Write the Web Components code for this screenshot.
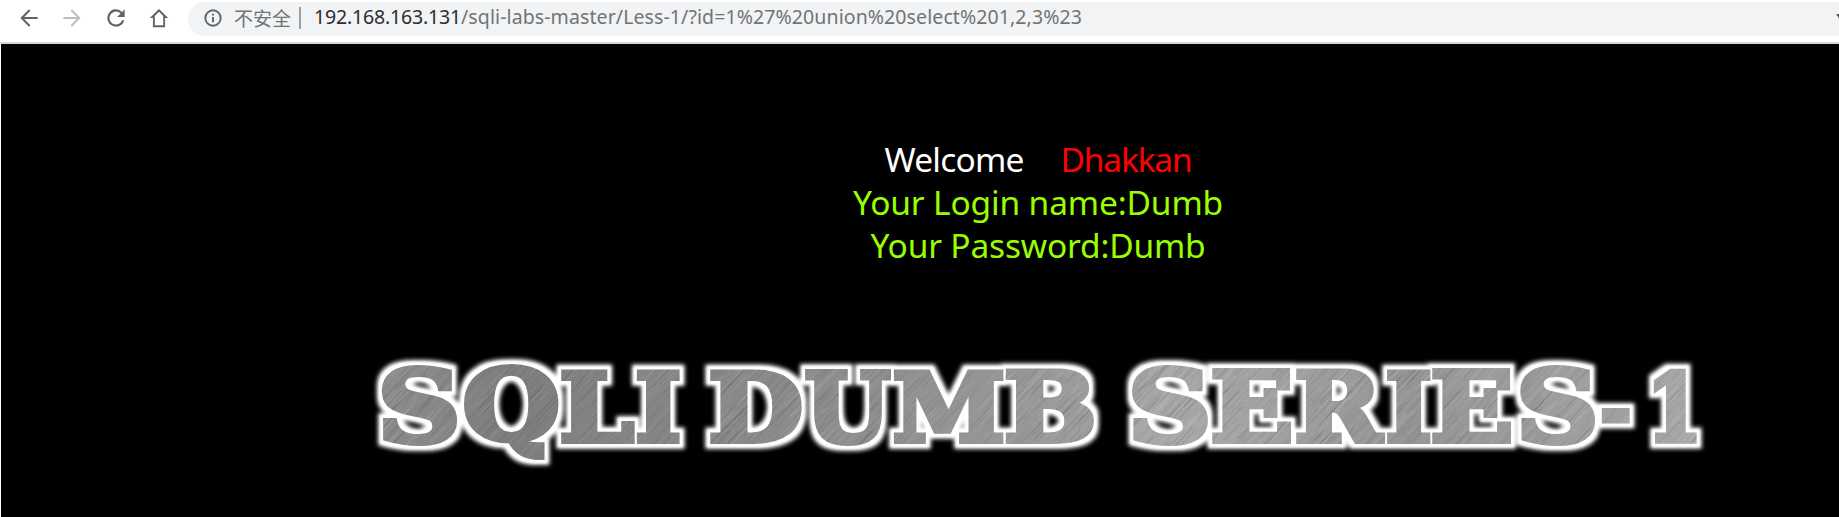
<!DOCTYPE html>
<html lang="en">
<head>
<meta charset="utf-8">
<title>Less-1</title>
<style>
html, body { margin: 0; height: 100%; background: #fff; overflow: hidden; }
body { font-family: "Noto Sans", "Noto Sans CJK SC", sans-serif; }
</style>
</head>
<body>
<lab-window>
  <browser-bar slot="bar"></browser-bar>
  <login-result slot="page"></login-result>
  <metal-banner slot="page"></metal-banner>
</lab-window>
<script>
// <fit-text width="…">: one line of text tracked to an exact advance width
class FitText extends HTMLElement {
  connectedCallback() {
    const root = this.attachShadow({ mode: 'open' });
    root.innerHTML = '<style>:host{display:inline-block;white-space:pre;line-height:1}</style><slot></slot>';
    const cs = getComputedStyle(this);
    const ctx = document.createElement('canvas').getContext('2d');
    ctx.font = `${cs.fontWeight} ${cs.fontSize} ${cs.fontFamily}`;
    const text = this.textContent, want = +this.getAttribute('width');
    this.style.letterSpacing = (want - ctx.measureText(text).width) / text.length + 'px';
    this.style.width = want + 'px';
  }
}
customElements.define('fit-text', FitText);

class LabWindow extends HTMLElement {
  constructor() {
    super();
    this.attachShadow({ mode: 'open' }).innerHTML = `
      <style>
        :host { display: flex; flex-direction: column; height: 517px; background: #fff; }
        main { flex: 1; margin-left: 1px; background: #000; display: flex; flex-direction: column; }
      </style>
      <slot name="bar"></slot><main><slot name="page"></slot></main>`;
  }
}
customElements.define('lab-window', LabWindow);

class BrowserBar extends HTMLElement {
  constructor() {
    super();
    this.attachShadow({ mode: 'open' }).innerHTML = `
      <style>
        :host { display: block; height: 44px; box-sizing: border-box; padding-top: 2px; border-bottom: 2px solid #d3d6da; background: #fff; }
        .row { display: flex; align-items: center; height: 34px; }
        nav { display: flex; width: 172px; padding-left: 16px; gap: 17.3px; align-items: center; flex: none; margin-top: -3px; }
        svg { display: block; width: 26px; height: 26px; fill: #5f6368; flex: none; }
        .off { fill: #bcbec1; }
        .url { flex: 1; min-width: 0; height: 34px; display: flex; align-items: center; background: #f1f3f4; border-radius: 17px 0 0 17px; font-size: 19.5px; color: #707377; overflow: hidden; }
        .info { width: 20px; height: 20px; margin-left: 14.5px; margin-top: -2px; }
        .cn { font-family: "Noto Sans CJK SC", sans-serif; font-weight: 400; font-size: 19px; margin-left: 11.5px; margin-top: -4px; }
        i { width: 2px; height: 22px; background: #9b9ea1; margin: -2px 13px 0 8px; }
        .addr { display: flex; margin-top: -4px; }
        .host { color: #2b2d30; }
        .star { width: 3px; height: 9px; margin: -6px 0 0 auto; }
      </style>
      <div class="row">
        <nav>
          <svg viewBox="0 0 24 24"><path d="M20 11.1H7.6l5.7-5.7L12 4l-8 8 8 8 1.3-1.4-5.7-5.7H20z"/></svg>
          <svg class="off" viewBox="0 0 24 24"><path d="M4 11.1h12.4l-5.7-5.7L12 4l8 8-8 8-1.3-1.4 5.7-5.7H4z"/></svg>
          <svg viewBox="0 0 24 24"><path d="M17.65 6.35A8 8 0 1 0 19.73 14h-2.08A6 6 0 1 1 12 6c1.66 0 3.14.69 4.22 1.78L13 11h7V4z"/></svg>
          <svg viewBox="0 0 24 24"><path d="M12 3.7 3.5 12H6.4v8.5h11.2V12h2.9zm0 2.6 3.9 3.9v8.5H8.1v-8.5z"/></svg>
        </nav>
        <div class="url">
          <svg class="info" viewBox="0 0 20 20"><circle cx="10" cy="10" r="7.7" fill="none" stroke="#5f6368" stroke-width="1.9"/><path d="M9.05 9h1.9v5.2h-1.9zM9.05 5.7h1.9v1.9h-1.9z"/></svg>
          <fit-text class="cn" width="57">不安全</fit-text><i></i>
          <div class="addr"><fit-text class="host" width="147">192.168.163.131</fit-text><fit-text width="621">/sqli-labs-master/Less-1/?id=1%27%20union%20select%201,2,3%23</fit-text></div>
          <svg class="star" viewBox="0 0 3 9"><path d="M0 2.5 3 2v5L2 4.6z" fill="#44474a"/></svg>
        </div>
      </div>`;
  }
}
customElements.define('browser-bar', BrowserBar);

class LoginResult extends HTMLElement {
  constructor() {
    super();
    this.attachShadow({ mode: 'open' }).innerHTML = `
      <style>
        :host { display: flex; flex-direction: column; align-items: center; padding: 94px 0 0 236px; font-size: 33.5px; color: #99ff00; }
        div { height: 43.3px; display: flex; align-items: center; }
        .hi { color: #fff; gap: 37px; }
        .red { color: #f00; }
      </style>
      <div class="hi"><fit-text width="139">Welcome</fit-text><fit-text class="red" width="131">Dhakkan</fit-text></div>
      <div><fit-text width="370">Your Login name:Dumb</fit-text></div>
      <div><fit-text width="335">Your Password:Dumb</fit-text></div>`;
  }
}
customElements.define('login-result', LoginResult);

// Brushed-metal headline: every letter is fitted to its own ink box [char, left, right, top, bottom]
class MetalBanner extends HTMLElement {
  constructor() {
    super();
    const T = 368.5, B = 443.5;
    const glyphs = [
      ['S', 380.5, 457.5, 364.5, 446], ['Q', 463, 559, 364, 459], ['L', 561, 635.5], ['I', 636.5, 679.5], [' '],
      ['D', 710, 802.5], ['U', 805, 891.5, T, 445.5], ['M', 893, 1004], ['B', 1005.5, 1095, T, 444], [' '],
      ['S', 1131, 1208.5, 364.5, 446], ['E', 1212, 1291, T, 444], ['R', 1296, 1386, T, 444], ['I', 1387, 1430.5],
      ['E', 1432, 1511, T, 444], ['S', 1519, 1595.5, 364.5, 446], ['-', 1601, 1630, 407.5, 423], ['1', 1653, 1697]];
    const SIZE = 90, SW = 5.5, font = 'bold 90px "DejaVu Serif"';
    const ctx = document.createElement('canvas').getContext('2d');
    ctx.font = font;
    let pats = '', letters = '';
    glyphs.forEach(([c, l, r, t = T, b = B], i) => {
      if (c === ' ') { letters += '<text> </text>'; return; }
      const m = ctx.measureText(c), x0 = -m.actualBoundingBoxLeft, x1 = m.actualBoundingBoxRight;
      const y0 = -m.actualBoundingBoxAscent, y1 = m.actualBoundingBoxDescent;
      const sx = (r - l) / (x1 - x0 + SW), sy = (b - t) / (y1 - y0 + SW);
      const tx = l - (x0 - SW / 2) * sx, ty = t - (y0 - SW / 2) * sy;
      pats += `<pattern id="p${i}" href="#metal" patternTransform="scale(${1 / sx} ${1 / sy}) translate(${-tx} ${-ty})"/>`;
      letters += `<text transform="translate(${tx} ${ty}) scale(${sx} ${sy})" fill="url(#p${i})" stroke="url(#p${i})">${c}</text>`;
    });
    let seed = 7, lines = '';
    const rnd = () => (seed = (seed * 16807) % 2147483647) / 2147483647;
    for (let k = 0; k < 2600; k++) {
      const x = 340 + rnd() * 1400, y = 355 + rnd() * 110, n = 8 + rnd() * 30;
      lines += `<path d="M${x.toFixed(1)} ${y.toFixed(1)}l${n.toFixed(1)} ${(-n * 1.05).toFixed(1)}" stroke="${rnd() > .5 ? '#fff' : '#000'}" stroke-opacity="${(.03 + rnd() * .07).toFixed(2)}"/>`;
    }
    this.attachShadow({ mode: 'open' }).innerHTML = `
      <style>
        :host { display: block; margin-top: 72px; }
        svg { display: block; width: 1838px; height: 140px; }
        text { font: ${font}, serif; font-size: ${SIZE}px; stroke-width: ${SW}px; stroke-linejoin: miter; stroke-miterlimit: 3; }
      </style>
      <svg viewBox="1 340 1838 140">
        <defs>
          <linearGradient id="tone" gradientUnits="userSpaceOnUse" x1="381" x2="1697" y1="380" y2="440">
            <stop offset="0" stop-color="#8e8e8e"/><stop offset=".1" stop-color="#7d7d7d"/><stop offset=".2" stop-color="#858585"/>
            <stop offset=".34" stop-color="#8c8c8c"/><stop offset=".54" stop-color="#9c9c9c"/><stop offset=".6" stop-color="#a9a9a9"/>
            <stop offset=".78" stop-color="#959595"/><stop offset=".9" stop-color="#9e9e9e"/><stop offset="1" stop-color="#a8a8a8"/>
          </linearGradient>
          <pattern id="metal" patternUnits="userSpaceOnUse" x="0" y="0" width="1839" height="517">
            <rect width="1839" height="517" fill="url(#tone)"/>${lines}
          </pattern>${pats}
          <filter id="glow" filterUnits="userSpaceOnUse" x="350" y="340" width="1380" height="140" color-interpolation-filters="sRGB">
            <feMorphology in="SourceAlpha" operator="dilate" radius="5" result="wide"/>
            <feGaussianBlur in="wide" stdDeviation="1.9" result="soft"/>
            <feFlood flood-color="#fff"/><feComposite in2="soft" operator="in" result="halo"/>
            <feMorphology in="SourceAlpha" operator="dilate" radius="3"/><feGaussianBlur stdDeviation=".9" result="near"/>
            <feFlood flood-color="#fff"/><feComposite in2="near" operator="in" result="rim"/>
            <feMerge><feMergeNode in="halo"/><feMergeNode in="rim"/><feMergeNode in="SourceGraphic"/></feMerge>
          </filter>
        </defs>
        <g filter="url(#glow)">${letters}</g>
      </svg>`;
  }
}
customElements.define('metal-banner', MetalBanner);
</script>
</body>
</html>
